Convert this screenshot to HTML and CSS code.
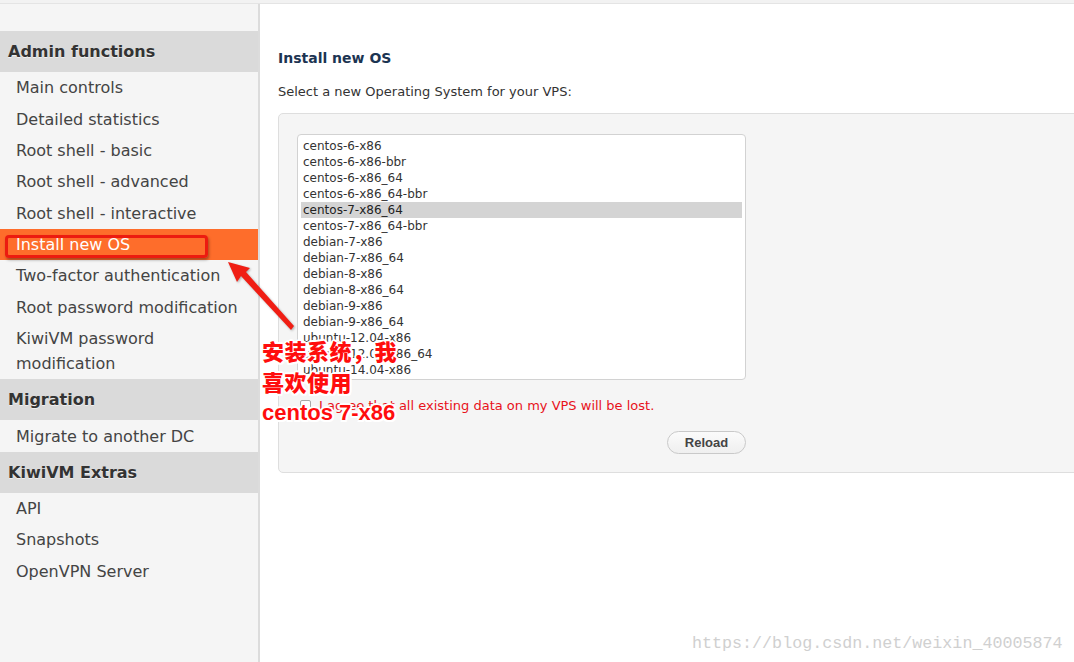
FILE: index.html
```html
<!DOCTYPE html>
<html>
<head>
<meta charset="utf-8">
<title>Install new OS</title>
<link rel="stylesheet" href="styles.css">
</head>
<body>
<div class="topbar"></div>
<div class="layout">
  <nav class="sidebar">
    <div class="nav-head">Admin functions</div>
    <div class="nav-item">Main controls</div>
    <div class="nav-item">Detailed statistics</div>
    <div class="nav-item">Root shell - basic</div>
    <div class="nav-item">Root shell - advanced</div>
    <div class="nav-item">Root shell - interactive</div>
    <div class="nav-item active">Install new OS</div>
    <div class="nav-item">Two-factor authentication</div>
    <div class="nav-item">Root password modification</div>
    <div class="nav-item">KiwiVM password modification</div>
    <div class="nav-head">Migration</div>
    <div class="nav-item">Migrate to another DC</div>
    <div class="nav-head">KiwiVM Extras</div>
    <div class="nav-item">API</div>
    <div class="nav-item">Snapshots</div>
    <div class="nav-item">OpenVPN Server</div>
  </nav>
  <main class="main">
    <h2 class="title">Install new OS</h2>
    <p class="intro">Select a new Operating System for your VPS:</p>
    <div class="panel">
      <div class="form">
        <div class="listbox">
          <div class="opt">centos-6-x86</div>
          <div class="opt">centos-6-x86-bbr</div>
          <div class="opt">centos-6-x86_64</div>
          <div class="opt">centos-6-x86_64-bbr</div>
          <div class="opt selected">centos-7-x86_64</div>
          <div class="opt">centos-7-x86_64-bbr</div>
          <div class="opt">debian-7-x86</div>
          <div class="opt">debian-7-x86_64</div>
          <div class="opt">debian-8-x86</div>
          <div class="opt">debian-8-x86_64</div>
          <div class="opt">debian-9-x86</div>
          <div class="opt">debian-9-x86_64</div>
          <div class="opt">ubuntu-12.04-x86</div>
          <div class="opt">ubuntu-12.04-x86_64</div>
          <div class="opt">ubuntu-14.04-x86</div>
          <div class="opt">ubuntu-14.04-x86_64</div>
        </div>
        <label class="agree"><span class="check"></span><span>I agree that all existing data on my VPS will be lost.</span></label>
        <div class="actions"><button class="btn">Reload</button></div>
      </div>
    </div>
  </main>
</div>

<div class="mark-box"></div>
<svg class="arrow" width="1074" height="662" viewBox="0 0 1074 662">
  <polygon points="228,262 250,268 246,272 294,326 291,330 241,276 237,282" fill="#f01e14"/>
</svg>
<div class="note">
  <div>安装系统，我</div>
  <div>喜欢使用</div>
  <div class="note-en">centos 7-x86</div>
</div>
<div class="watermark">https://blog.csdn.net/weixin_40005874</div>
</body>
</html>
```

FILE: styles.css
```css
html, body {
  margin: 0;
  padding: 0;
  height: 100%;
  overflow: hidden;
  background: #fff;
}
body {
  font-family: "DejaVu Sans", Verdana, sans-serif;
  color: #444;
  position: relative;
}
.topbar {
  height: 3px;
  background: #f2f2f2;
  border-bottom: 1px solid #e4e4e4;
}
.layout {
  display: flex;
  height: calc(100% - 4px);
}
.sidebar {
  width: 258px;
  flex: 0 0 258px;
  background: #f5f5f5;
  border-right: 2px solid #dcdcdc;
  padding-top: 27px;
  box-sizing: content-box;
}
.nav-head {
  height: 41px;
  line-height: 41px;
  padding-left: 8px;
  background: #dadada;
  font-weight: bold;
  font-size: 16px;
  color: #333;
  text-shadow: 0 1px 0 rgba(255,255,255,0.6);
}
.nav-item {
  font-size: 16px;
  line-height: 25px;
  padding: 3.2px 16px 3.2px 16px;
  color: #444;
}
.nav-item.active {
  background: #fe6d2b;
  color: #fff;
}
.main {
  flex: 1;
  padding: 45px 0 0 18px;
  overflow: hidden;
}
.title {
  margin: 0;
  font-size: 14px;
  line-height: 18px;
  font-weight: bold;
  color: #1c3452;
}
.intro {
  margin: 16px 0 0 0;
  font-size: 13px;
  line-height: 18px;
  color: #333;
}
.panel {
  margin-top: 12px;
  width: 840px;
  background: #f5f5f5;
  border: 1px solid #dedede;
  border-radius: 5px;
  padding: 20px 18px 18px 18px;
  box-sizing: border-box;
}
.form {
  width: 449px;
}
.listbox {
  height: 246px;
  box-sizing: border-box;
  background: #fff;
  border: 1px solid #d2d2d2;
  border-radius: 4px;
  padding: 3px 3px 0 3px;
  overflow: hidden;
}
.opt {
  font-size: 12px;
  line-height: 16px;
  height: 16px;
  padding-left: 2px;
  color: #333;
  white-space: nowrap;
}
.opt.selected {
  background: #d4d4d4;
  color: #222;
}
.agree {
  display: flex;
  align-items: center;
  gap: 8px;
  margin-top: 17px;
  padding-left: 3px;
  height: 16px;
  font-size: 13px;
  color: #e8121b;
}
.check {
  display: inline-block;
  width: 11px;
  height: 11px;
  box-sizing: border-box;
  border: 1px solid #a8a8a8;
  border-radius: 2px;
  background: #fff;
}
.actions {
  display: flex;
  justify-content: flex-end;
  margin-top: 18px;
}
.btn {
  width: 79px;
  height: 23px;
  border: 1px solid #c9c9c9;
  border-radius: 12px;
  background: linear-gradient(#fbfbfb, #efefef);
  font-family: "Liberation Sans", Arial, sans-serif;
  font-weight: bold;
  font-size: 13px;
  color: #444;
  padding: 0;
}

/* annotations overlay */
.mark-box {
  position: absolute;
  left: 5px;
  top: 235px;
  width: 197px;
  height: 17px;
  border: 3px solid #ec1b10;
  border-radius: 4px;
  box-shadow: 1px 2px 3px rgba(0,0,0,0.35);
}
.arrow {
  position: absolute;
  left: 0;
  top: 0;
  pointer-events: none;
  filter: drop-shadow(1px 1px 1px rgba(0,0,0,0.3));
}
.note {
  position: absolute;
  left: 262px;
  top: 335px;
  font-family: "Noto Sans CJK SC", sans-serif;
  font-weight: 900;
  font-size: 22px;
  line-height: 31px;
  color: #ff0d0d;
  text-shadow: -2px 0 0 #fff, 2px 0 0 #fff, 0 -2px 0 #fff, 0 2px 0 #fff,
    -1.5px -1.5px 0 #fff, 1.5px -1.5px 0 #fff, -1.5px 1.5px 0 #fff, 1.5px 1.5px 0 #fff;
  letter-spacing: 0.5px;
}
.note-en {
  font-family: "Liberation Sans", Arial, sans-serif;
  font-weight: bold;
  font-size: 22px;
  letter-spacing: 0;
}
.watermark {
  position: absolute;
  left: 692px;
  top: 634px;
  font-family: "Liberation Mono", monospace;
  font-size: 16.7px;
  color: #d0d0d0;
}
```
